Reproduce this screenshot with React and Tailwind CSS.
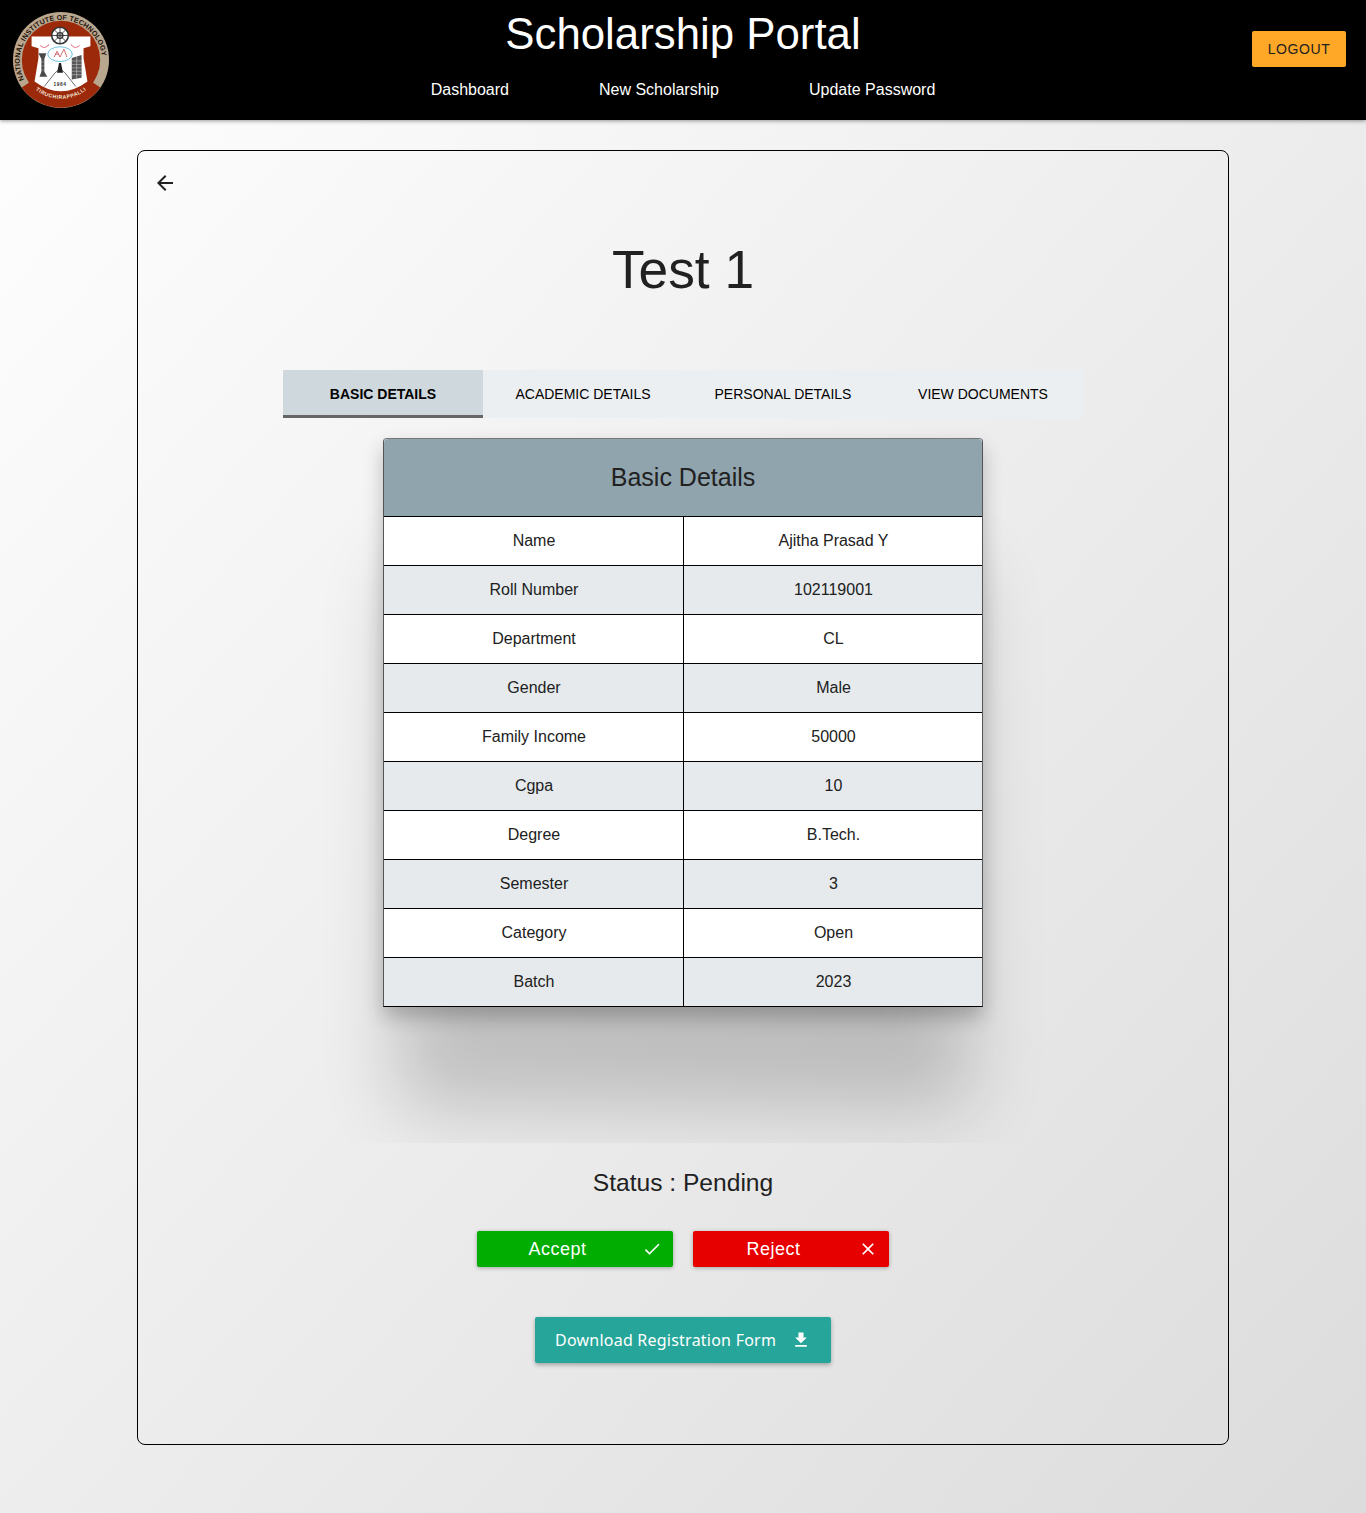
import React from 'react';

const rows = [
  ['Name', 'Ajitha Prasad Y'],
  ['Roll Number', '102119001'],
  ['Department', 'CL'],
  ['Gender', 'Male'],
  ['Family Income', '50000'],
  ['Cgpa', '10'],
  ['Degree', 'B.Tech.'],
  ['Semester', '3'],
  ['Category', 'Open'],
  ['Batch', '2023'],
];

const tabs = ['BASIC DETAILS', 'ACADEMIC DETAILS', 'PERSONAL DETAILS', 'VIEW DOCUMENTS'];

function Icon({ d, className }) {
  return (
    <svg viewBox="0 0 24 24" fill="currentColor" className={className}>
      <path d={d} />
    </svg>
  );
}

function Logo() {
  return (
    <svg viewBox="0 0 100 100" className="w-[98px] h-[98px]">
      <defs>
        <path id="topArc" d="M 12.5 70 A 42 42 0 1 1 87.5 70" />
        <path id="bottomArc" d="M 17 73 A 41 41 0 0 0 83 73" />
      </defs>
      <circle cx="50" cy="50" r="49" fill="#b9a68e" />
      <circle cx="50" cy="50" r="40" fill="#9c2a0a" />
      <path d="M 10 78 A 49 49 0 0 0 90 78 L 78 70 A 38 38 0 0 1 22 70 Z" fill="#9c2a0a" />
      <text fontSize="7.3" fontWeight="700" fill="#1f130b" letterSpacing="0.12" fontFamily="'Liberation Sans', sans-serif">
        <textPath href="#topArc">NATIONAL INSTITUTE OF TECHNOLOGY</textPath>
      </text>
      <text fontSize="5.4" fontWeight="700" fill="#f1e6d8" letterSpacing="0.5" fontFamily="'Liberation Sans', sans-serif">
        <textPath href="#bottomArc" startOffset="50%" textAnchor="middle">TIRUCHIRAPPALLI</textPath>
      </text>
      {/* shield */}
      <path d="M20 26 H80 V36 L73 38 V48 L77 72 Q50 92 23 72 L27 48 V38 L20 36 Z" fill="#fff" />
      {/* wheel */}
      <circle cx="49" cy="25" r="8.5" fill="#fff" stroke="#333" strokeWidth="1.6" />
      <circle cx="49" cy="25" r="3" fill="none" stroke="#333" strokeWidth="1.3" />
      <path d="M49 17V33M41 25H57M43.3 19.3L54.7 30.7M54.7 19.3L43.3 30.7" stroke="#333" strokeWidth="0.9" />
      {/* lamps */}
      <path d="M29 35Q33 40 38 34M60 34Q64 40 69 35" fill="none" stroke="#e58a9b" strokeWidth="1.1" />
      {/* oval emblem */}
      <ellipse cx="49" cy="44" rx="12.5" ry="7.5" fill="#fff" stroke="#59b7dc" strokeWidth="0.9" />
      <path d="M43 47L46 41L49 47M49 47L53 39L56 47M44 44H48" fill="none" stroke="#c4454f" strokeWidth="0.8" />
      {/* chimney */}
      <path d="M27 43H35L33 49V62L36 67H28L30 62V49Z" fill="#4a4a4a" />
      <path d="M30 52H33M30 56H33M30 60H33" stroke="#ccc" strokeWidth="0.5" />
      {/* building */}
      <path d="M61 48L71 45V68L61 70Z" fill="#555" />
      <path d="M61 51H71M61 54.5H71M61 58H71M61 61.5H71M61 65H71M66 46V69" stroke="#ddd" strokeWidth="0.5" />
      {/* hill and temple */}
      <path d="M33 77L44 63L49 59L54 63L65 77" fill="none" stroke="#444" strokeWidth="0.8" />
      <path d="M46 63L48 53H50L52 63Z" fill="#222" />
      <text x="49" y="77" textAnchor="middle" fontSize="5" fontWeight="700" fill="#333" letterSpacing="0.5" fontFamily="'Liberation Sans', sans-serif">1964</text>
    </svg>
  );
}

export default function App() {
  return (
    <div className="min-h-[1513px] bg-gradient-to-br from-white to-[#dcdcdc] font-['Liberation_Sans',Arial,sans-serif] text-[#212121]">
      {/* Header */}
      <header className="relative h-[120px] bg-black text-white shadow-[0_1px_4px_rgba(0,0,0,0.4)] grid grid-cols-[1fr_auto_1fr]">
        <div className="pl-3 pt-[11px]">
          <Logo />
        </div>
        <div className="flex flex-col items-center">
          <h1 className="text-[43.8px] leading-[52px] mt-[8px] font-normal">Scholarship Portal</h1>
          <nav className="flex gap-[90px] mt-[18px] text-base leading-[24px]">
            <a>Dashboard</a>
            <a>New Scholarship</a>
            <a>Update Password</a>
          </nav>
        </div>
        <div className="flex justify-end pr-5 pt-[31px]">
          <button className="h-9 w-[94px] rounded-[2px] bg-[#ffa726] text-[#212121] text-sm tracking-[0.6px]">
            LOGOUT
          </button>
        </div>
      </header>

      <main className="pt-[30px] flex justify-center">
        <div className="w-[1092px] h-[1295px] rounded-lg border border-black flex flex-col items-center">
          <div className="self-start pl-[15px] pt-5 h-[55px]">
            <Icon d="M20 11H7.83l5.59-5.59L12 4l-8 8 8 8 1.41-1.41L7.83 13H20v-2z" className="w-6 h-6" />
          </div>

          <h2 className="text-[53.3px] leading-[60px] mt-[34px]">Test 1</h2>

          {/* Tabs */}
          <div className="flex mt-[70px] w-[800px] bg-[#eceff1] text-sm text-black">
            {tabs.map((t, i) => (
              <div
                key={t}
                className={
                  i === 0
                    ? 'w-[200px] h-12 flex items-center justify-center bg-[#cfd8dc] font-bold pt-[3px] border-b-[3px] border-[#666666]'
                    : 'w-[200px] h-12 flex items-center justify-center'
                }
              >
                {t}
              </div>
            ))}
          </div>

          {/* Details table; the wrapper clips the long drop shadow */}
          <div className="w-[800px] h-[725px] overflow-hidden flex justify-center pt-5">
            <div className="w-[600px] h-[569px] rounded-t bg-white border border-[#555555] border-t-[#777777] border-b-black shadow-[0_115px_70px_-14px_rgba(0,0,0,0.19),0_10px_20px_rgba(0,0,0,0.24)]">
              <div className="h-[77px] bg-[#90a4ae] flex items-center justify-center text-[25px] rounded-t">
                Basic Details
              </div>
              {rows.map(([label, value], i) => (
                <div
                  key={label}
                  className={`h-[49px] grid grid-cols-[300px_1fr] border-t border-black text-base ${
                    i % 2 === 1 ? 'bg-[#e6eaed]' : 'bg-white'
                  }`}
                >
                  <div className="flex items-center justify-center pl-px border-r border-black">{label}</div>
                  <div className="flex items-center justify-center pl-px">{value}</div>
                </div>
              ))}
            </div>
          </div>

          <p className="text-[24.6px] leading-[30px] mt-[25px]">Status : Pending</p>

          <div className="flex gap-5 mt-[33px]">
            <button className="relative w-[196px] h-9 rounded-[2px] bg-[#00ad00] text-white text-lg tracking-[0.5px] pr-[35px] shadow-[0_1px_4px_rgba(0,0,0,0.3)]">
              Accept
              <Icon d="M9 16.17 4.83 12l-1.42 1.41L9 19 21 7l-1.41-1.41z" className="absolute right-[11px] top-[8px] w-5 h-5" />
            </button>
            <button className="relative w-[196px] h-9 rounded-[2px] bg-[#e60000] text-white text-lg tracking-[0.5px] pr-[35px] shadow-[0_1px_4px_rgba(0,0,0,0.3)]">
              Reject
              <Icon d="M19 6.41 17.59 5 12 10.59 6.41 5 5 6.41 10.59 12 5 17.59 6.41 19 12 13.41 17.59 19 19 17.59 13.41 12z" className="absolute right-[11px] top-[8px] w-5 h-5" />
            </button>
          </div>

          <button className="mt-[50px] w-[296px] h-[46px] rounded-[2px] bg-[#26a69a] text-white text-base tracking-[0.23px] font-['Noto_Sans',sans-serif] flex items-center justify-between pl-5 pr-5 shadow-[0_2px_4px_rgba(0,0,0,0.3)]">
            <span>Download Registration Form</span>
            <Icon d="M19 9h-4V3H9v6H5l7 7 7-7zM5 18v2h14v-2H5z" className="w-5 h-5 shrink-0" />
          </button>
        </div>
      </main>
    </div>
  );
}
